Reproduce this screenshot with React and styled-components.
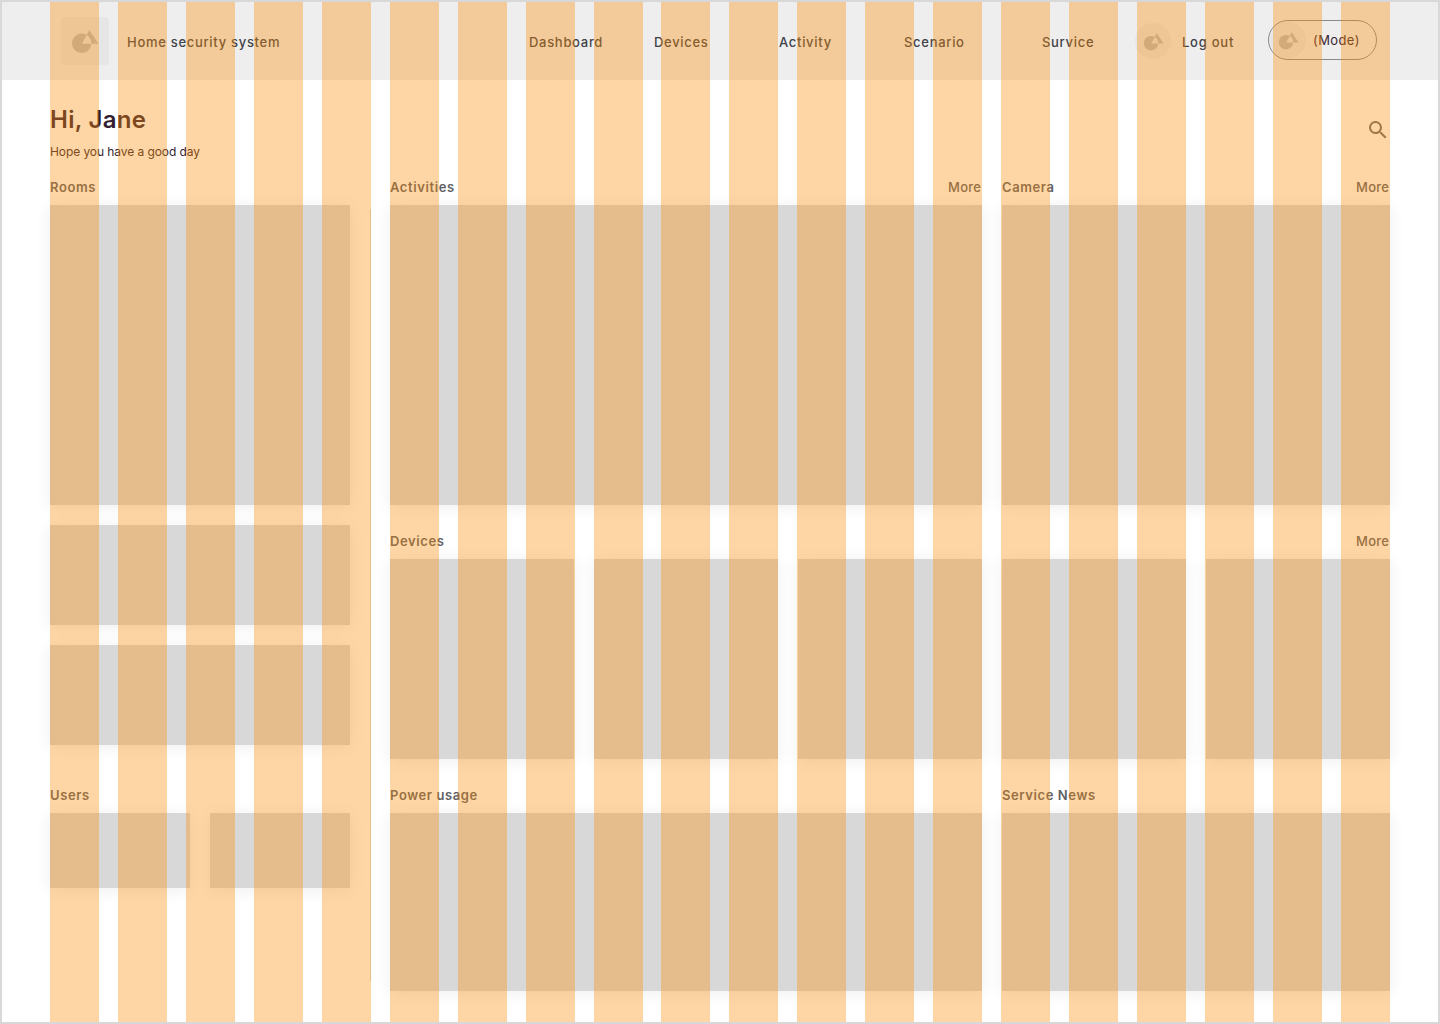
import React from "react";
import styled, { createGlobalStyle } from "styled-components";

const GlobalStyle = createGlobalStyle`
  html, body {
    margin: 0;
    padding: 0;
    background: #fff;
  }
  * {
    box-sizing: border-box;
  }
`;

const navItems = [
  { label: "Dashboard", width: 125 },
  { label: "Devices", width: 125 },
  { label: "Activity", width: 125 },
  { label: "Scenario", width: 138 },
  { label: "Survice", width: 93 },
];

const Frame = styled.div`
  position: relative;
  width: 1440px;
  height: 1024px;
  overflow: hidden;
  border: 2px solid #d8d8d8;
  background: #fff;
  font-family: Inter, "Noto Sans", sans-serif;
  color: #3f4248;
`;

const Header = styled.header`
  display: flex;
  align-items: center;
  height: 78px;
  padding-left: 59px;
  background: #eeeeee;
`;

const LogoBox = styled.div`
  display: flex;
  align-items: center;
  justify-content: center;
  width: 48px;
  height: 48px;
  border-radius: 4px;
  background: #e6e6e6;
`;

const Brand = styled.div`
  width: 402px;
  margin-left: 18px;
  padding-top: 1px;
  font-size: 13px;
  font-weight: 500;
  letter-spacing: 0.7px;
  line-height: 16px;
  white-space: nowrap;
`;

const NavItem = styled.a`
  flex: none;
  width: ${({ $width }) => $width}px;
  padding-top: 1px;
  font-size: 13px;
  font-weight: 500;
  letter-spacing: 0.7px;
  line-height: 16px;
  white-space: nowrap;
`;

const Avatar = styled.div`
  display: flex;
  align-items: center;
  justify-content: center;
  flex: none;
  width: 36px;
  height: 36px;
  border-radius: 50%;
  background: #e6e6e6;
`;

const LogOut = styled.a`
  flex: none;
  width: 86px;
  margin-left: 11px;
  padding-top: 1px;
  font-size: 13px;
  font-weight: 500;
  letter-spacing: 0.75px;
  line-height: 16px;
`;

const ModeToggle = styled.div`
  display: flex;
  align-items: center;
  flex: none;
  width: 109px;
  height: 40px;
  margin-top: -2px;
  padding-left: 1px;
  border: 1px solid #8a8a8a;
  border-radius: 20px;
`;

const ModeLabel = styled.span`
  margin-left: 7px;
  font-size: 13px;
  letter-spacing: 0.4px;
  color: #3a2430;
`;

const Content = styled.main`
  padding: 0 48px;
`;

const Greeting = styled.div`
  display: flex;
  justify-content: space-between;
  height: 98px;
  padding-top: 26px;
`;

const Title = styled.h1`
  margin: 0;
  font-size: 24px;
  font-weight: 600;
  letter-spacing: 0.3px;
  line-height: 28px;
  color: #321e30;
`;

const Subtitle = styled.p`
  margin: 10px 0 0;
  font-size: 12px;
  letter-spacing: -0.08px;
  line-height: 16px;
  color: #321e30;
`;

const SearchButton = styled.div`
  margin: 15px 3px 0 0;
  line-height: 0;
`;

const Columns = styled.div`
  display: flex;
`;

const Sidebar = styled.aside`
  display: flex;
  flex-direction: column;
  flex: none;
  width: 300px;
`;

const Divider = styled.div`
  flex: none;
  width: 1px;
  margin: 31px 19px 10px 20px;
  background: #d8d8d8;
`;

const Board = styled.div`
  display: grid;
  grid-template-columns: 592px 388px;
  column-gap: 20px;
  flex: none;
`;

const Section = styled.section`
  display: flex;
  flex-direction: column;
  grid-column: ${({ $wide }) => ($wide ? "1 / -1" : "auto")};
  margin-top: ${({ $top }) => $top || 0}px;
`;

const SectionHead = styled.div`
  display: flex;
  justify-content: space-between;
  height: 18px;
  margin-bottom: 9px;
  font-size: 13px;
  font-weight: 600;
  letter-spacing: 0.6px;
  line-height: 18px;
  color: #606066;
`;

const More = styled.span`
  padding-right: 1px;
  font-weight: 500;
  letter-spacing: 0.2px;
`;

const Card = styled.div`
  flex: none;
  width: ${({ $w }) => ($w ? `${$w}px` : "100%")};
  height: ${({ $h }) => $h}px;
  background: #d8d8d8;
  box-shadow: 0 2px 16px rgba(0, 0, 0, 0.07);
`;

const CardStack = styled.div`
  display: flex;
  flex-direction: column;
  gap: 20px;
`;

const CardRow = styled.div`
  display: flex;
  justify-content: space-between;
`;

const GridOverlay = styled.div`
  position: absolute;
  top: 0;
  bottom: 0;
  left: 48px;
  display: flex;
  justify-content: space-between;
  width: 1340px;
  pointer-events: none;
`;

const GridColumn = styled.div`
  width: 49px;
  background: rgba(252, 142, 5, 0.36);
`;

// circle and triangle placeholder mark, the overlap stays empty
const LogoMark = ({ size = 28, fill = "#bababa" }) => (
  <svg width={size} height={size} viewBox="0 0 28 28">
    <path
      fillRule="evenodd"
      fill={fill}
      d="M10.7 6.6a9.7 9.7 0 1 0 0 19.4a9.7 9.7 0 1 0 0-19.4zM18.3 3L27.3 16.7L11 16.7z"
    />
  </svg>
);

const SearchIcon = () => (
  <svg width="18" height="18" viewBox="3 3 18 18" fill="#6b6b6b">
    <path d="M15.5 14h-.79l-.28-.27A6.47 6.47 0 0 0 16 9.5 6.5 6.5 0 1 0 9.5 16c1.61 0 3.09-.59 4.23-1.57l.27.28v.79l5 4.99L20.49 19l-4.99-5zm-6 0C7.01 14 5 11.99 5 9.5S7.01 5 9.5 5 14 7.01 14 9.5 11.99 14 9.5 14z" />
  </svg>
);

const App = () => {
  return (
    <Frame>
      <GlobalStyle />
      <Header>
        <LogoBox>
          <LogoMark />
        </LogoBox>
        <Brand>Home security system</Brand>
        {navItems.map((item) => (
          <NavItem key={item.label} $width={item.width}>
            {item.label}
          </NavItem>
        ))}
        <Avatar>
          <LogoMark size={21} />
        </Avatar>
        <LogOut>Log out</LogOut>
        <ModeToggle>
          <Avatar>
            <LogoMark size={21} />
          </Avatar>
          <ModeLabel>(Mode)</ModeLabel>
        </ModeToggle>
      </Header>
      <Content>
        <Greeting>
          <div>
            <Title>Hi, Jane</Title>
            <Subtitle>Hope you have a good day</Subtitle>
          </div>
          <SearchButton>
            <SearchIcon />
          </SearchButton>
        </Greeting>
        <Columns>
          <Sidebar>
            <SectionHead>Rooms</SectionHead>
            <CardStack>
              <Card $h={300} />
              <Card $h={100} />
              <Card $h={100} />
            </CardStack>
            <Section $top={41}>
              <SectionHead>Users</SectionHead>
              <CardRow>
                <Card $w={140} $h={75} />
                <Card $w={140} $h={75} />
              </CardRow>
            </Section>
          </Sidebar>
          <Divider />
          <Board>
            <Section>
              <SectionHead>
                Activities
                <More>More</More>
              </SectionHead>
              <Card $h={300} />
            </Section>
            <Section>
              <SectionHead>
                Camera
                <More>More</More>
              </SectionHead>
              <Card $h={300} />
            </Section>
            <Section $wide $top={27}>
              <SectionHead>
                Devices
                <More>More</More>
              </SectionHead>
              <CardRow>
                {[0, 1, 2, 3, 4].map((i) => (
                  <Card key={i} $w={184} $h={200} />
                ))}
              </CardRow>
            </Section>
            <Section $top={27}>
              <SectionHead>Power usage</SectionHead>
              <Card $h={178} />
            </Section>
            <Section $top={27}>
              <SectionHead>Service News</SectionHead>
              <Card $h={178} />
            </Section>
          </Board>
        </Columns>
      </Content>
      <GridOverlay>
        {Array.from({ length: 20 }, (_, i) => (
          <GridColumn key={i} />
        ))}
      </GridOverlay>
    </Frame>
  );
};

export default App;
